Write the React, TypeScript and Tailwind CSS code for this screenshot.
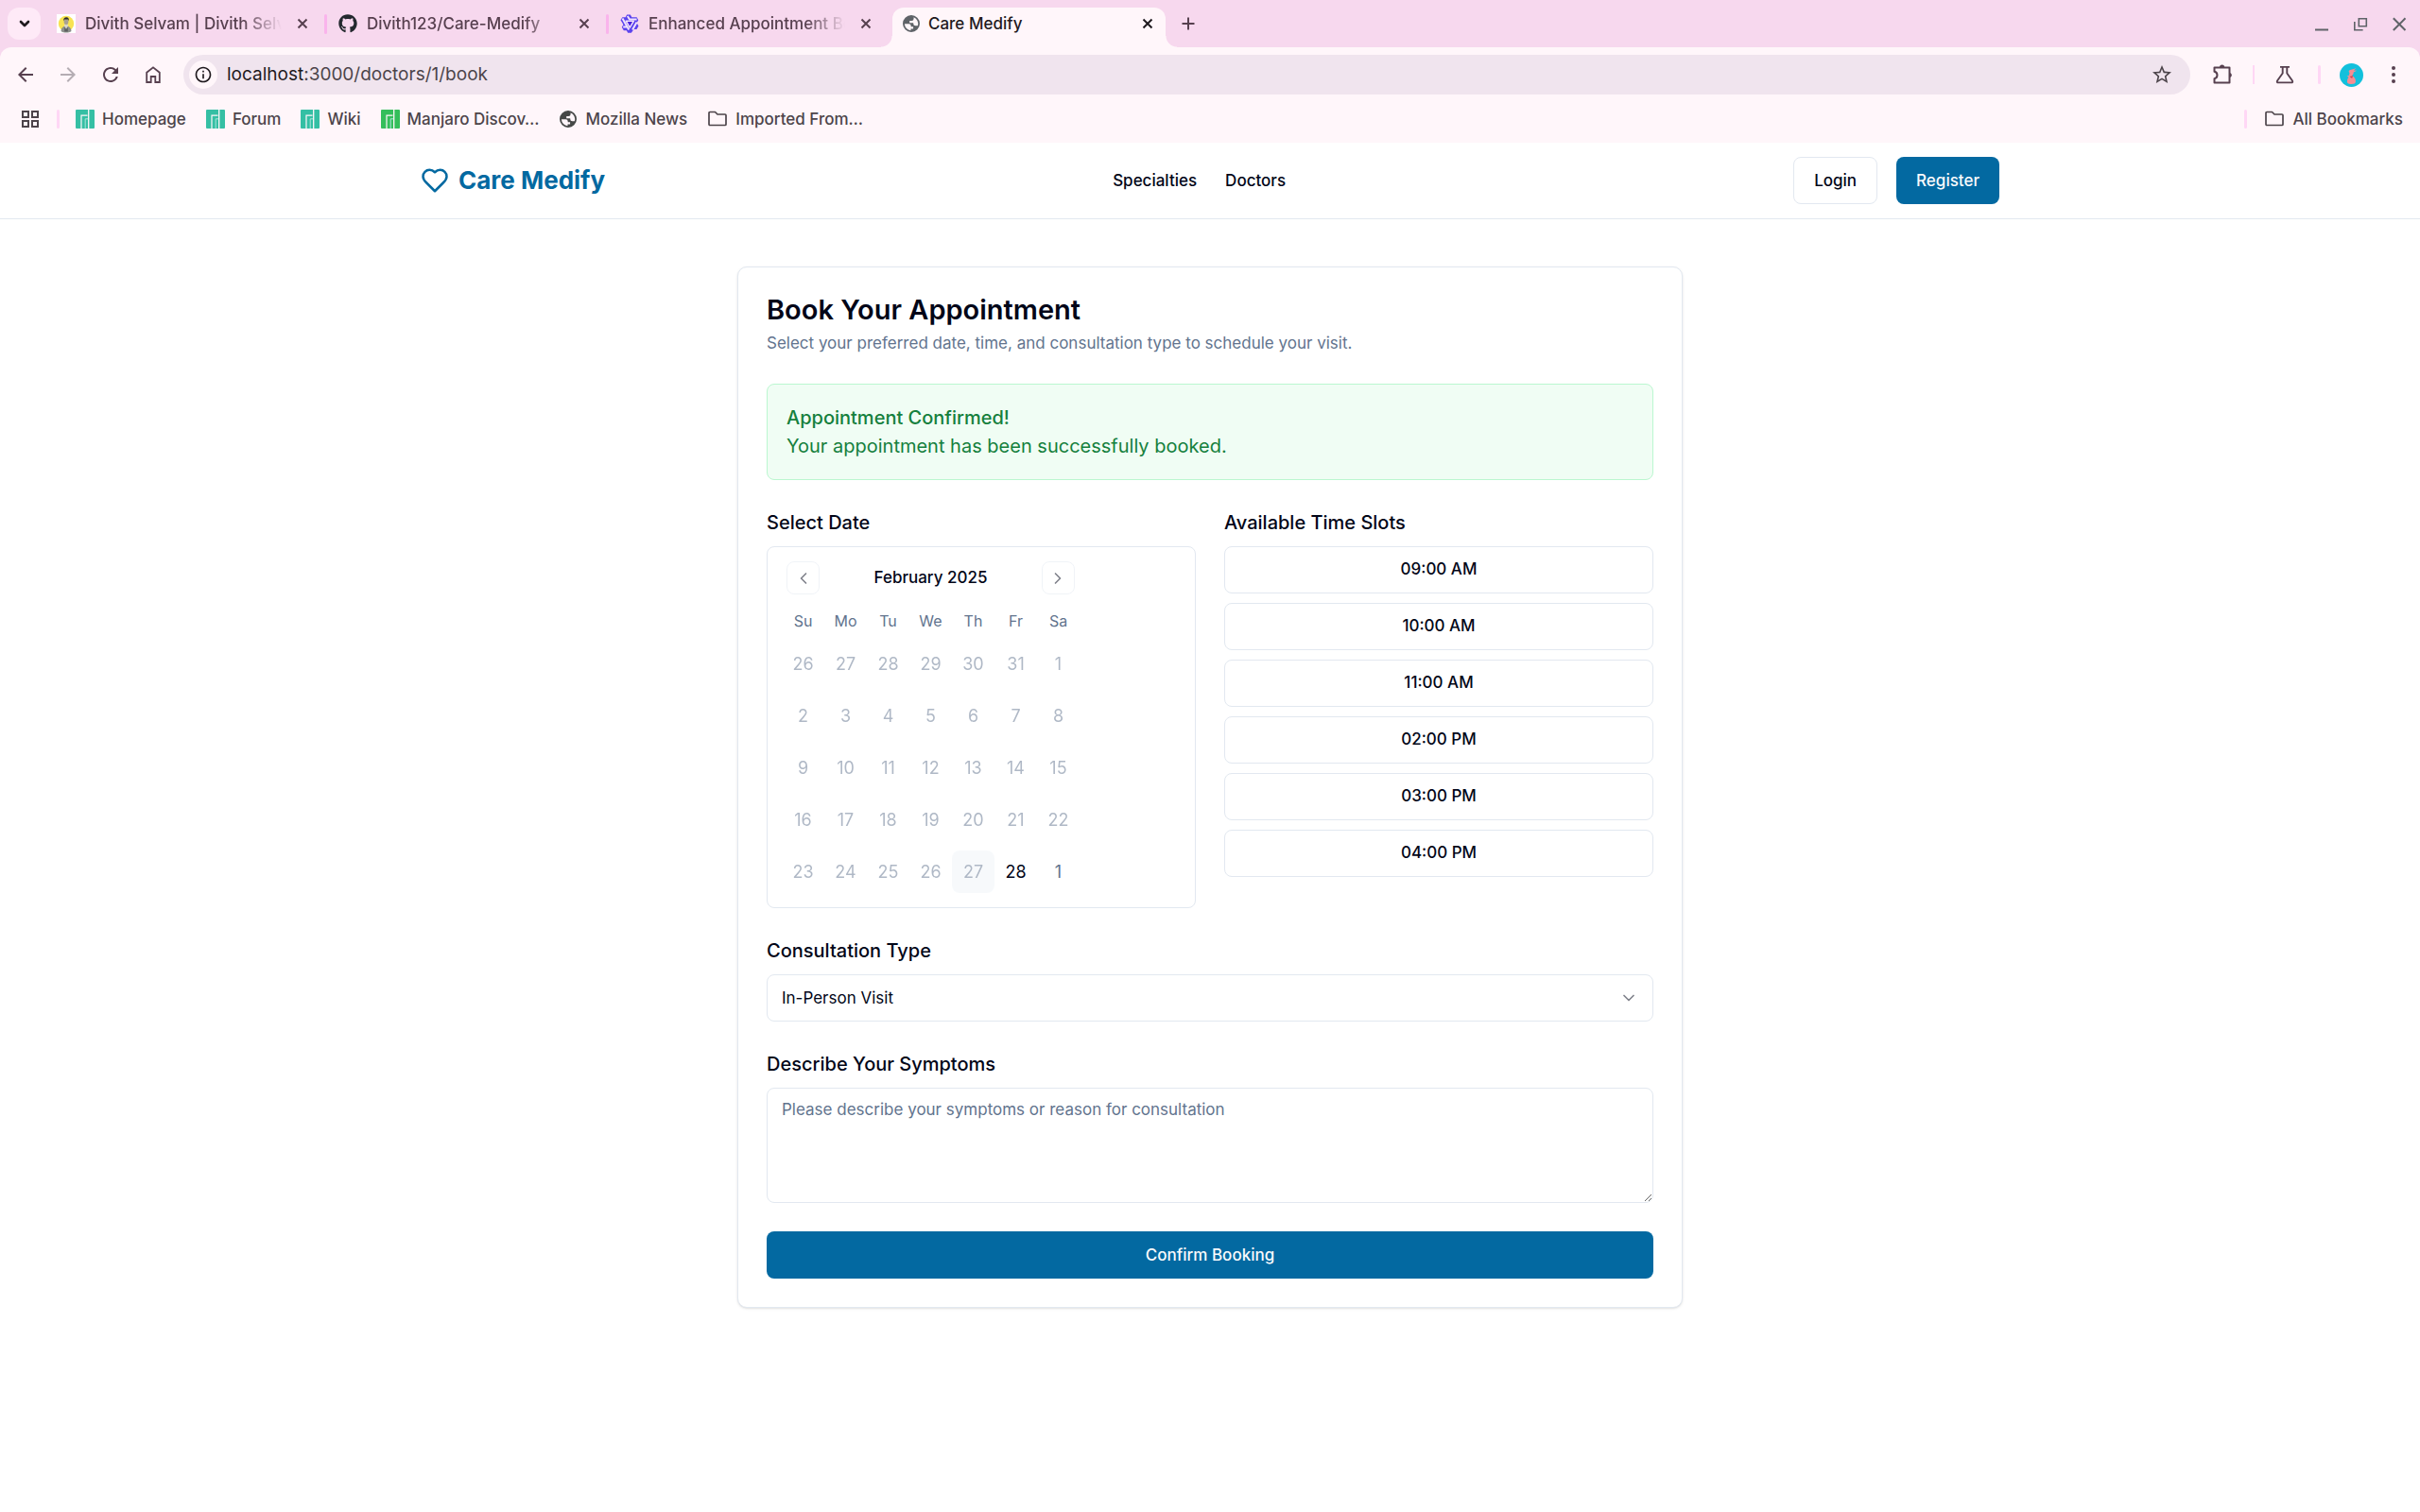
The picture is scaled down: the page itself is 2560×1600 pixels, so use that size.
import React from "react";
import { ChevronDown, ChevronLeft, ChevronRight } from "lucide-react";
import { FaGithub } from "react-icons/fa";
import { MdArrowBack, MdArrowForward, MdInfoOutline, MdRefresh, MdStarBorder } from "react-icons/md";

type IconProps = { className?: string };

function CloseIcon({ className }: IconProps) {
  return (
    <svg viewBox="0 0 20 20" className={className} fill="none" stroke="currentColor" strokeWidth="2" aria-hidden="true">
      <path d="M5.500 5.500l9 9M14.500 5.500l-9 9" />
    </svg>
  );
}

function GlobeIcon({ className }: IconProps) {
  return (
    <svg viewBox="0 0 20 20" className={className} fill="currentColor" fillRule="evenodd" aria-hidden="true">
      <path d="M10 1a9 9 0 1 1 0 18 9 9 0 0 1 0-18zM2.900 10.200h4.600q2.200 0 2.200 2.200v.9h2.400v2.200H9.500v1.700a7.300 7.300 0 0 1-6.600-7zM12.600 3.200a7.300 7.300 0 0 1 4.200 9.100h-2.400q-2.200 0-2.200-2.200V9.200H8.200V6.900h2.200q2.200 0 2.200-2.200z" />
    </svg>
  );
}

function PersonFavicon() {
  return (
    <svg viewBox="0 0 20 20" className="size-5" aria-hidden="true">
      <rect width="20" height="20" fill="#ffffff" />
      <circle cx="10" cy="10" r="8.200" fill="#f8e352" />
      <path d="M4.500 18c.2-3.600 2.300-5.500 5.500-5.500s5.300 1.900 5.500 5.500c-3 2-8 2-11 0z" fill="#8d8f8c" />
      <path d="M7.800 12.600l2.200 2.600 2.200-2.600-.5-2H8.300z" fill="#d9d4ca" />
      <ellipse cx="10" cy="7.800" rx="2.400" ry="3.200" fill="#a8a093" />
      <path d="M7.200 7.200C7 4.600 8.200 3.200 10.200 3.200s3 1.600 2.600 4l-.8-1.700-3.800.1z" fill="#2d2d2b" />
      <path d="M8.200 13.500l1.800 2.700 1.800-2.700v5H8.200z" fill="#5c5f5f" />
    </svg>
  );
}

function StarKnotFavicon() {
  return (
    <svg viewBox="0 0 20 20" className="size-5" strokeLinejoin="round" aria-hidden="true">
      <path
        d="M7.200.6h3.600l1.600 2.600h5.200l1.700 3-1.700 3 1.900 3.400-2 3.500h-3l-2.700 3.700H8.200L6.800 17.300H3.800l-2-3.500 1.600-2.800L.5 6.300l1.900-3h3.300z"
        fill="#5b43ee"
      />
      <path d="M7.800 2l2.200 3.500h7.600M2.500 4.600l6.800 12M17.600 8.500l-4.500 8M3.200 13.600h4" stroke="#efe2fd" strokeWidth="2" fill="none" />
      <path d="M6.200 7.200h8.200L10.300 14.200z" fill="#4b22dd" stroke="#f4e4fb" strokeWidth="1.400" />
    </svg>
  );
}

function ManjaroIcon({ className }: IconProps) {
  return (
    <svg viewBox="0 0 20 20" className={className} aria-hidden="true">
      <rect width="20" height="20" rx="1" fill="currentColor" />
      <path d="M13.700 0v20" stroke="#fff6fa" strokeWidth="1.300" />
      <path d="M6 20V6.200h6.500" stroke="#fff6fa" strokeWidth="1.200" fill="none" />
      <path d="M10.200 20V9.800H13" stroke="#a9e6da" strokeWidth="1" fill="none" />
    </svg>
  );
}

function HomeIcon() {
  return (
    <svg viewBox="0 0 20 20" className="size-5" fill="none" stroke="currentColor" strokeWidth="1.800" aria-hidden="true">
      <path d="M3.200 18V7.800L10 2.400l6.800 5.400V18h-4.500v-6H7.700v6z" />
    </svg>
  );
}

function AppsIcon() {
  return (
    <svg viewBox="0 0 20 20" className="size-5" fill="none" stroke="currentColor" strokeWidth="2" aria-hidden="true">
      <path d="M2 2h6v6H2zM12 2h6v6h-6zM2 12h6v6H2zM12 12h6v6h-6z" />
    </svg>
  );
}

function FolderIcon() {
  return (
    <svg viewBox="0 0 22 20" className="h-5 w-[22px]" fill="none" stroke="currentColor" strokeWidth="1.700" strokeLinejoin="round" aria-hidden="true">
      <path d="M2 15.500V3.500q0-1 1-1h5.500l2.500 2.500h8q1 0 1 1v9.500q0 1-1 1H3q-1 0-1-1z" />
    </svg>
  );
}

function PuzzleIcon() {
  return (
    <svg viewBox="0 0 24 24" className="size-6" fill="none" stroke="currentColor" strokeWidth="2" strokeLinejoin="round" aria-hidden="true">
      <path d="M3.500 4.500h16V20.500h-16v-4.300c2-.4 3-1.800 3-3.700s-1-3.300-3-3.700z" />
      <path d="M9 4a2.600 2.600 0 0 1 5.200 0zM20 10a2.600 2.600 0 0 1 0 5z" fill="currentColor" stroke="none" />
    </svg>
  );
}

function FlaskIcon() {
  return (
    <svg viewBox="0 0 20 20" className="size-5" fill="none" stroke="currentColor" strokeWidth="1.900" strokeLinejoin="round" aria-hidden="true">
      <path d="M5 1.900h10M7.700 2v6.500L2 16.500q-.8 1.900 1.200 1.900h13.600q2 0 1.200-1.900L12.300 8.500V2" />
    </svg>
  );
}

function RabbitAvatar() {
  return (
    <svg viewBox="0 0 25 25" className="size-[25px]" aria-hidden="true">
      <circle cx="12.500" cy="12.500" r="12.500" fill="#12c0dc" />
      <path d="M10.500 10.500C9 8.500 9.500 7 12 6.800l5.500-1.600-2.700 2.400 3.400.1-3.500 1.800c.1 1.900-.8 2.900-1.700 3.600 2.700 1.500 4.300 4 3.900 6.300-.3 1.900-2 2.600-5 2.500-3.200 0-4.400-1.200-3.900-3.700.2-1.400.9-2.600 1.500-3.500l-1.900-1.200 2.100-.6z" fill="#f58d93" />
      <path d="M10.500 13.500c1 .8 2.500.2 3.300-1.200l-.3 3.200c-1.200.2-2.300-.6-3-2z" fill="#cf3d4c" />
    </svg>
  );
}

function HeartIcon() {
  return (
    <svg viewBox="0 0 24 24" className="size-[30px]" fill="none" stroke="currentColor" strokeWidth="2" strokeLinecap="round" strokeLinejoin="round" aria-hidden="true">
      <path d="M19 14c1.490-1.460 3-3.210 3-5.500A5.500 5.500 0 0 0 16.500 3c-1.760 0-3 .5-4.500 2-1.500-1.500-2.740-2-4.500-2A5.500 5.500 0 0 0 2 8.500c0 2.300 1.500 4.050 3 5.500l7 7Z" />
    </svg>
  );
}

function Tab({ icon, title, active, divider }: { icon: React.ReactNode; title: string; active?: boolean; divider?: boolean }) {
  return (
    <div
      className={
        active
          ? "relative mt-2 flex h-[42px] w-[289px] items-center rounded-t-xl bg-[#fff6fa] pb-2 pl-[10px] text-[#1f1a1e]"
          : "relative mt-2 flex h-[42px] w-[298px] items-center pb-2 pl-[10px] text-[#57404f]"
      }
    >
      <span className="flex size-5 shrink-0 items-center justify-center">{icon}</span>
      <span
        className={
          active
            ? "ml-2 w-[210px] overflow-hidden whitespace-nowrap"
            : "ml-[10px] w-[208px] overflow-hidden whitespace-nowrap [mask-image:linear-gradient(to_right,black_80%,transparent)]"
        }
      >
        {title}
      </span>
      <button type="button" aria-label={`Close ${title}`} className="ml-3 flex size-5 shrink-0 items-center justify-center">
        <CloseIcon className="size-5" />
      </button>
      {divider && <span className="ml-[13px] h-[21px] w-[3px] rounded-full bg-[#fab4ec]" />}
      {active && (
        <>
          <span className="absolute bottom-0 right-full size-3 bg-[radial-gradient(circle_at_0_0,#f7d8ee_11px,#fff6fa_12px)]" />
          <span className="absolute bottom-0 left-full size-3 bg-[radial-gradient(circle_at_100%_0,#f7d8ee_11px,#fff6fa_12px)]" />
        </>
      )}
    </div>
  );
}

function TabStrip() {
  return (
    <div className="flex h-[50px] items-start text-[17px] leading-6">
      <button type="button" aria-label="Search tabs" className="ml-2 mt-2 mr-[7px] flex h-[34px] w-[35px] items-center justify-center rounded-xl bg-[#feeaf7] text-[#1f1a1e]">
        <ChevronDown className="size-4" strokeWidth={4} />
      </button>
      <Tab icon={<PersonFavicon />} title="Divith Selvam | Divith Selvam" divider />
      <Tab icon={<FaGithub className="size-5 text-[#24292f]" />} title="Divith123/Care-Medify" divider />
      <Tab icon={<StarKnotFavicon />} title="Enhanced Appointment Booking" />
      <Tab icon={<GlobeIcon className="size-5 text-[#5f6368]" />} title="Care Medify" active />
      <button type="button" aria-label="New tab" className="ml-[14px] mt-[15px] text-[#57404f]">
        <svg viewBox="0 0 20 20" className="size-5" fill="none" stroke="currentColor" strokeWidth="2" aria-hidden="true">
          <path d="M10 3.500v13M3.500 10h13" />
        </svg>
      </button>
      <div className="ml-auto mr-3 mt-[15px] flex gap-[21px] text-[#5f6368]">
        <button type="button" aria-label="Minimize">
          <svg viewBox="0 0 20 20" className="size-5" stroke="currentColor" strokeWidth="2" aria-hidden="true">
            <path d="M3 16.500h14" />
          </svg>
        </button>
        <button type="button" aria-label="Restore">
          <svg viewBox="0 0 20 20" className="size-5" fill="none" stroke="currentColor" strokeWidth="1.600" aria-hidden="true">
            <path d="M8.300 4.800h8v8h-8zM3.800 8v8.800h8.800" />
          </svg>
        </button>
        <button type="button" aria-label="Close window">
          <svg viewBox="0 0 20 20" className="size-5" stroke="currentColor" strokeWidth="2" aria-hidden="true">
            <path d="M3.800 4.300l12.700 12.700M16.500 4.300L3.800 17" />
          </svg>
        </button>
      </div>
    </div>
  );
}

function AddressBar() {
  return (
    <div className="flex h-[58px] items-center text-[#57404f]">
      <div className="ml-[15px] mr-5 flex gap-[21px]">
        <button type="button" aria-label="Back"><MdArrowBack className="size-6" /></button>
        <button type="button" aria-label="Forward" disabled><MdArrowForward className="size-6 text-[#b5adb3]" /></button>
        <button type="button" aria-label="Reload"><MdRefresh className="size-6" /></button>
        <button type="button" aria-label="Home" className="flex size-6 items-center justify-center"><HomeIcon /></button>
      </div>
      <div className="flex h-[42px] flex-1 items-center rounded-full bg-[#f0e4ee] pl-[6px] pr-[18px]">
        <button type="button" aria-label="Site information" className="flex size-[30px] items-center justify-center rounded-full bg-[#fff6fa] text-[#1f1a1e]">
          <MdInfoOutline className="size-5" />
        </button>
        <div className="ml-[10px] flex-1 whitespace-nowrap text-[19px] font-normal leading-6 text-[#4c444a]">
          <span className="text-[#1f1a1e]">localhost</span>:3000/doctors/1/book
        </div>
        <button type="button" aria-label="Bookmark this tab" className="text-[#4c444a]"><MdStarBorder className="size-6" /></button>
      </div>
      <button type="button" aria-label="Extensions" className="ml-[22px]"><PuzzleIcon /></button>
      <span className="ml-5 h-5 w-[2px] bg-[#ffd7f5]" />
      <button type="button" aria-label="Labs" className="ml-[22px]"><FlaskIcon /></button>
      <span className="ml-[25px] h-5 w-[3px] rounded-full bg-[#ffd7f5]" />
      <button type="button" aria-label="Profile" className="ml-5"><RabbitAvatar /></button>
      <button type="button" aria-label="Menu" className="ml-5 mr-4">
        <svg viewBox="0 0 24 24" className="size-6" fill="currentColor" aria-hidden="true">
          <circle cx="12" cy="5" r="2" />
          <circle cx="12" cy="12" r="2" />
          <circle cx="12" cy="19" r="2" />
        </svg>
      </button>
    </div>
  );
}

function Bookmark({ icon, label }: { icon: React.ReactNode; label: string }) {
  return (
    <a href="#" className="flex items-center gap-2">
      {icon}
      {label}
    </a>
  );
}

function BookmarksBar() {
  return (
    <div className="flex h-9 items-center text-[17px] leading-6 text-[#4c444a]">
      <button type="button" aria-label="Apps" className="ml-[22px]"><AppsIcon /></button>
      <span className="ml-[18px] mr-[17px] h-5 w-[3px] rounded-full bg-[#ffd7f5]" />
      <nav aria-label="Bookmarks" className="flex gap-[21px]">
        <Bookmark icon={<ManjaroIcon className="size-5 text-[#35bfa4]" />} label="Homepage" />
        <Bookmark icon={<ManjaroIcon className="size-5 text-[#35bfa4]" />} label="Forum" />
        <Bookmark icon={<ManjaroIcon className="size-5 text-[#35bfa4]" />} label="Wiki" />
        <Bookmark icon={<ManjaroIcon className="size-5 text-[#34be5b]" />} label="Manjaro Discov…" />
        <Bookmark icon={<GlobeIcon className="size-5 text-[#454746]" />} label="Mozilla News" />
        <Bookmark icon={<FolderIcon />} label="Imported From…" />
      </nav>
      <span className="ml-auto h-5 w-[3px] rounded-full bg-[#ffd7f5]" />
      <div className="ml-[18px] mr-[18px]">
        <Bookmark icon={<FolderIcon />} label="All Bookmarks" />
      </div>
    </div>
  );
}

function SiteHeader() {
  return (
    <header className="border-b border-slate-200">
      <div className="mx-auto flex h-20 max-w-[1750px] items-center justify-between px-10 text-[17px] font-medium leading-[25px]">
        <a href="#" className="flex items-center gap-[10px] text-[26px] font-bold leading-9 text-[#0369a1]">
          <HeartIcon />
          Care Medify
        </a>
        <nav className="flex gap-[30px]">
          <a href="#">Specialties</a>
          <a href="#">Doctors</a>
        </nav>
        <div className="flex gap-5">
          <button type="button" className="h-[50px] rounded-lg border border-slate-200 px-[21px]">Login</button>
          <button type="button" className="h-[50px] rounded-lg bg-[#0369a1] px-[21px] text-slate-50">Register</button>
        </div>
      </div>
    </header>
  );
}

const WEEKDAYS = ["Su", "Mo", "Tu", "We", "Th", "Fr", "Sa"];
const WEEKS = [
  [26, 27, 28, 29, 30, 31, 1],
  [2, 3, 4, 5, 6, 7, 8],
  [9, 10, 11, 12, 13, 14, 15],
  [16, 17, 18, 19, 20, 21, 22],
  [23, 24, 25, 26, 27, 28, 1],
];
const SLOTS = ["09:00 AM", "10:00 AM", "11:00 AM", "02:00 PM", "03:00 PM", "04:00 PM"];

function dayClass(week: number, day: number) {
  if (week === 4 && day === 4) return "size-[45px] rounded-lg bg-slate-100 text-slate-500 opacity-50";
  if (week === 4 && day === 5) return "size-[45px] rounded-lg text-slate-950";
  if (week === 4 && day === 6) return "size-[45px] rounded-lg text-slate-500";
  return "size-[45px] rounded-lg text-slate-500 opacity-50";
}

function Calendar() {
  return (
    <div className="rounded-lg border border-slate-200 p-[15px]">
      <div className="w-[315px]">
        <div className="flex items-center justify-between px-[5px] text-[17px] font-medium leading-[25px]">
          <button type="button" aria-label="Previous month" className="flex size-[35px] items-center justify-center rounded-lg border border-slate-200 opacity-50">
            <ChevronLeft className="size-5" />
          </button>
          February 2025
          <button type="button" aria-label="Next month" className="flex size-[35px] items-center justify-center rounded-lg border border-slate-200 opacity-50">
            <ChevronRight className="size-5" />
          </button>
        </div>
        <table className="mt-[15px] w-full border-collapse">
          <thead>
            <tr className="flex">
              {WEEKDAYS.map((d) => (
                <th key={d} scope="col" className="h-[26px] w-[45px] text-[16px] font-normal leading-[26px] text-slate-500">{d}</th>
              ))}
            </tr>
          </thead>
          <tbody>
            {WEEKS.map((week, w) => (
              <tr key={w} className="mt-[10px] flex">
                {week.map((n, d) => (
                  <td key={d} className="size-[45px] text-[18px]">
                    <button type="button" disabled={w < 4 || d < 5} className={dayClass(w, d)}>{n}</button>
                  </td>
                ))}
              </tr>
            ))}
          </tbody>
        </table>
      </div>
    </div>
  );
}

function BookingCard() {
  return (
    <section className="mx-auto max-w-[1000px] rounded-[10px] border border-slate-200 bg-white p-[30px] shadow-sm">
      <h1 className="text-[29px] font-semibold leading-[30px]">Book Your Appointment</h1>
      <p className="mt-2 text-[17px] leading-[25px] text-slate-500">
        Select your preferred date, time, and consultation type to schedule your visit.
      </p>
      <form className="mt-[30px] flex flex-col gap-[30px]" onSubmit={(e) => e.preventDefault()}>
        <div role="status" className="rounded-lg border border-[#bbf7d0] bg-[#f0fdf4] p-5 text-[20px] leading-[30px] text-[#15803d]">
          <p className="font-medium">Appointment Confirmed!</p>
          <p>Your appointment has been successfully booked.</p>
        </div>
        <div className="grid grid-cols-2 gap-[30px]">
          <div>
            <h2 className="mb-[10px] text-[20px] font-medium leading-[30px]">Select Date</h2>
            <Calendar />
          </div>
          <div>
            <h2 className="mb-[10px] text-[20px] font-medium leading-[30px]">Available Time Slots</h2>
            <div className="grid gap-[10px]">
              {SLOTS.map((slot) => (
                <button key={slot} type="button" className="flex h-[50px] items-start justify-center rounded-lg border border-slate-200 py-[11px] text-[17px] font-medium leading-[25px]">
                  {slot}
                </button>
              ))}
            </div>
          </div>
        </div>
        <div>
          <label htmlFor="type" className="mb-[10px] block text-[20px] font-medium leading-[30px]">Consultation Type</label>
          <div className="relative">
            <select id="type" className="block h-[50px] w-full appearance-none rounded-lg border border-slate-200 bg-white px-[15px] text-[17px] leading-[25px]">
              <option>In-Person Visit</option>
            </select>
            <ChevronDown className="pointer-events-none absolute right-4 top-[15px] size-5 opacity-50" />
          </div>
        </div>
        <div>
          <label htmlFor="symptoms" className="mb-[10px] block text-[20px] font-medium leading-[30px]">Describe Your Symptoms</label>
          <textarea
            id="symptoms"
            rows={4}
            placeholder="Please describe your symptoms or reason for consultation"
            className="block w-full resize rounded-lg border border-slate-200 px-[15px] py-[10px] text-[17px] leading-[25px] placeholder:text-slate-500"
          />
        </div>
        <button type="submit" className="h-[50px] rounded-lg bg-[#0369a1] text-[17px] font-medium leading-[25px] text-slate-50">
          Confirm Booking
        </button>
      </form>
    </section>
  );
}

export default function App() {
  return (
    <div className="min-h-screen bg-white font-['Inter',sans-serif] text-slate-950">
      <div className="bg-[#f7d8ee] font-medium">
        <TabStrip />
        <div className="rounded-t-xl bg-[#fff6fa] pb-[7px]">
          <AddressBar />
          <BookmarksBar />
        </div>
      </div>
      <SiteHeader />
      <main className="px-10 py-[50px]">
        <BookingCard />
      </main>
    </div>
  );
}
